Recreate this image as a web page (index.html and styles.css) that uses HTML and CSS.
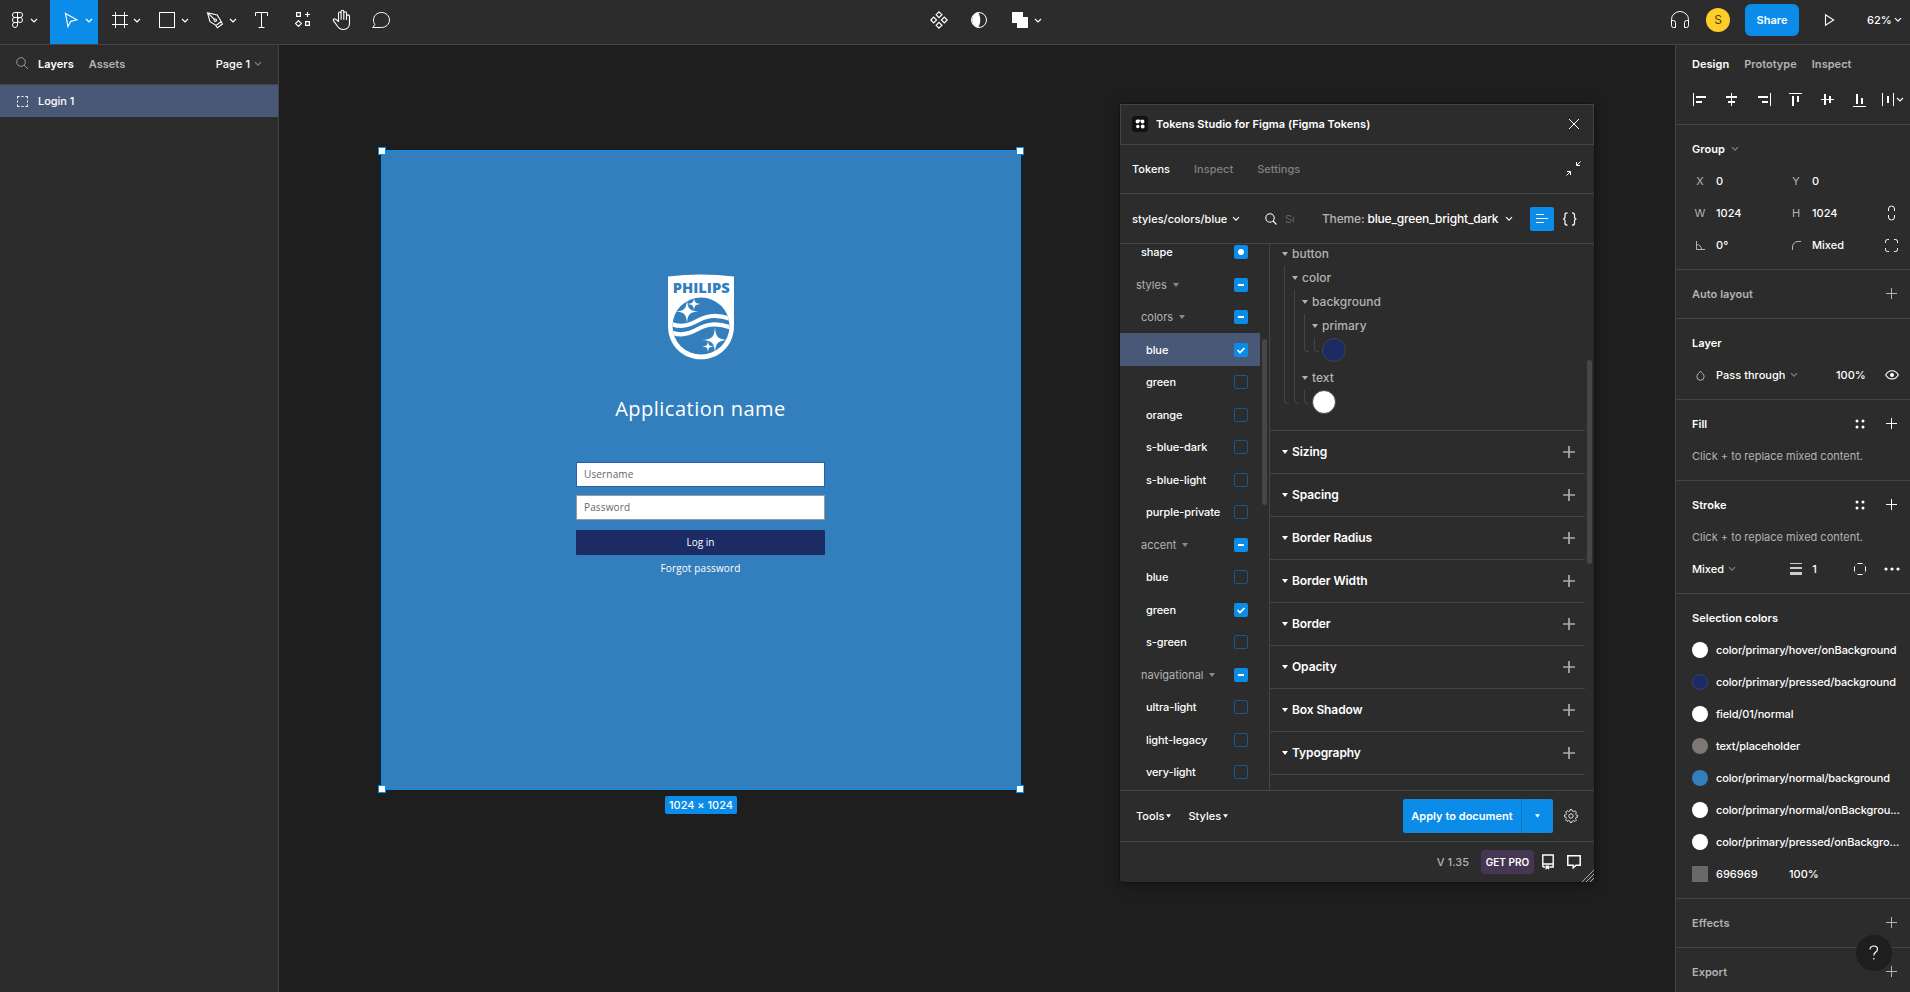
FILE: index.html
```html
<!DOCTYPE html>
<html lang="en">
<head>
<meta charset="utf-8">
<title>Login 1</title>
<link rel="stylesheet" href="styles.css">
</head>
<body>
<svg class="defs" width="0" height="0">
  <symbol id="chev" viewBox="0 0 8 6"><path d="M1 1.2 4 4.2 7 1.2" fill="none" stroke="currentColor" stroke-width="1.2"/></symbol>
  <symbol id="plus" viewBox="0 0 12 12"><path d="M5.5 0v11M0 5.5h11" fill="none" stroke="currentColor"/></symbol>
  <symbol id="plus2" viewBox="0 0 12 12"><path d="M6 0v12M0 6h12" fill="none" stroke="currentColor" stroke-width="1.7"/></symbol>
  <symbol id="tri" viewBox="0 0 6 4"><path d="M0 0h6L3 4z" fill="currentColor"/></symbol>
  <symbol id="dots" viewBox="0 0 10 10"><g fill="currentColor"><circle cx="2" cy="2" r="1.5"/><circle cx="8" cy="2" r="1.5"/><circle cx="2" cy="8" r="1.5"/><circle cx="8" cy="8" r="1.5"/></g></symbol>
  <symbol id="star" viewBox="-10 -10 20 20"><path d="M0-10C.6-2 2-.6 10 0 2 .6.6 2 0 10-.6 2-2 .6-10 0-2-.6-.6-2 0-10z" fill="#fff"/></symbol>
</svg>
<div class="app">
  <header class="toolbar">
    <div class="tools">
      <svg width="50" height="44" viewBox="0 0 50 44"><g fill="none" stroke="#fff"><path d="M17.500 12.500h-2.600a2.500 2.500 0 0 0 0 5h2.600zM17.500 12.500h2.600a2.500 2.500 0 0 1 0 5h-2.600zM17.500 17.500h-2.600a2.500 2.500 0 0 0 0 5h2.600zM17.500 22.500h-2.600a2.500 2.500 0 1 0 2.600 2.500z"/><circle cx="20" cy="20" r="2.500"/></g><path class="tchev" d="M31 19l3 3 3-3"/></svg>
      <svg class="active" width="48" height="44" viewBox="50 0 48 44"><path d="M65.500 13.500l11.300 6.300-6 1.500-2.800 5.200z" fill="none" stroke="#fff" stroke-width="1.200"/><path class="tchev" d="M86 19l3 3 3-3"/></svg>
      <svg width="48" height="44" viewBox="98 0 48 44"><path d="M115.500 12v16M124.500 12v16M112 15.500h16M112 24.500h16" fill="none" stroke="#fff"/><path class="tchev" d="M134 19l3 3 3-3"/></svg>
      <svg width="48" height="44" viewBox="146 0 48 44"><rect x="159.500" y="12.500" width="15" height="15" fill="none" stroke="#fff"/><path class="tchev" d="M182 19l3 3 3-3"/></svg>
      <svg width="48" height="44" viewBox="194 0 48 44"><g fill="none" stroke="#fff" stroke-width="1.100"><path d="M207.500 12.700l9.700 2.200 4 6.600-5.200 3.900-6-3.700zM208 13.200l6.500 6.300M221 21.400l1.400 2.600-5.100 3.700-1.700-2.400"/><circle cx="215.300" cy="20.200" r="1.200"/></g><path class="tchev" d="M230 19l3 3 3-3"/></svg>
      <svg width="40" height="44" viewBox="242 0 40 44"><path d="M255.500 16v-3.500h12V16M261.500 12.500v15M258.500 27.500h6" fill="none" stroke="#fff"/></svg>
      <svg width="40" height="44" viewBox="282 0 40 44"><g fill="none" stroke="#fff" stroke-width="1.200"><path d="M296.600 12.600h3.800v3.800h-3.800zM305.600 21.600h3.800v3.800h-3.800zM307.500 12v5M305 14.500h5M298.500 20.700l2.900 2.900-2.900 2.900-2.900-2.900z"/></g></svg>
      <svg width="40" height="44" viewBox="322 0 40 44"><path d="M338.500 21.500v-8c0-2 2.600-2 2.600 0v6.200-8c0-1.900 2.700-1.900 2.700 0v8-6.600c0-1.900 2.700-1.900 2.700 0v7-3.800c0-1.900 3-1.900 3 0v7c0 4-2.700 6.200-6 6.200-3.600 0-5.200-1.600-6.500-4l-3.600-4.800c-.8-1.500 1-2.500 2.200-1.400z" fill="none" stroke="#fff" stroke-width="1.100"/></svg>
      <svg width="40" height="44" viewBox="362 0 40 44"><path d="M381.500 12.500c-4.500 0-8 3.300-8 7.500 0 2 .5 3.300 1.400 4.500l-2.200 3h8.800c4.500 0 8-3.300 8-7.500s-3.500-7.500-8-7.500z" fill="none" stroke="#fff"/></svg>
    </div>
    <svg class="center-tools" width="130" height="44" viewBox="920 0 130 44">
      <g fill="none" stroke="#fff" stroke-width="1.200"><path d="M939 11.800l2.900 2.900-2.900 2.900-2.900-2.900zM939 22.400l2.900 2.900-2.900 2.900-2.900-2.900zM933.700 17.100l2.900 2.900-2.900 2.900-2.900-2.900zM944.300 17.100l2.900 2.900-2.900 2.900-2.900-2.900z"/></g>
      <circle cx="979" cy="20" r="7.500" fill="none" stroke="#fff"/><path d="M978 12.300a8 8 0 0 0 0 15.400c3-4 3-11.400 0-15.400z" fill="#fff"/>
      <path d="M1012 12h11v5h5v11h-11v-5h-5z" fill="#fff"/><path class="tchev" d="M1035 19l3 3 3-3"/>
    </svg>
    <div class="account">
      <svg width="20" height="20" viewBox="1670 10 20 20"><path d="M1671.500 23v-3.500a8.500 8 0 0 1 17 0V23M1671.500 20.500h2a2 2 0 0 1 2 2v5h-2a2 2 0 0 1-2-2zM1688.500 20.500h-2a2 2 0 0 0-2 2v5h2a2 2 0 0 0 2-2z" fill="none" stroke="#fff"/></svg>
      <span class="avatar">S</span>
      <span class="share">Share</span>
      <svg class="play" width="12" height="14" viewBox="0 0 12 14"><path d="M1.500 1.700v10.600L9.700 7z" fill="none" stroke="#fff" stroke-width="1.100"/></svg>
      <span class="zoom">62%</span>
      <svg width="8" height="6"><use href="#chev"/></svg>
    </div>
  </header>
  <div class="workspace">
    <aside class="layers">
      <div class="layers-head">
        <svg width="14" height="14" viewBox="0 0 14 14"><g fill="none" stroke="#999"><circle cx="5" cy="5" r="4.300"/><path d="M8 8l4 4"/></g></svg>
        <b>Layers</b><b class="dim">Assets</b>
        <span class="page">Page 1</span><svg class="grey" width="8" height="6"><use href="#chev"/></svg>
      </div>
      <div class="layer-row"><svg width="11" height="11" viewBox="0 0 11 11"><path d="M.5 2.500v-2h2M4.500.5h2M8.500.5h2v2M10.500 4.500v2M10.500 8.500v2h-2M6.500 10.500h-2M2.500 10.500h-2v-2M.5 6.500v-2" fill="none" stroke="#fff"/></svg>Login 1</div>
    </aside>
    <main class="canvas">
      <div class="artboard">
        <i class="handle tl"></i><i class="handle tr"></i><i class="handle bl"></i><i class="handle br"></i>
        <svg class="logo" width="66" height="86" viewBox="0 0 66 86">
          <path d="M0 2.500Q33-1.500 66 2.500V52c0 19-14.500 33.300-33 33.300S0 71 0 52z" fill="#fff"/>
          <text x="4.700" y="18.700" textLength="57" lengthAdjust="spacingAndGlyphs" class="brand">PHILIPS</text>
          <clipPath id="disc"><circle cx="33" cy="52" r="28.500"/></clipPath>
          <circle cx="33" cy="52" r="28.500" fill="#337fbd"/>
          <g clip-path="url(#disc)" fill="none" stroke="#fff" stroke-width="4.200"><path d="M0 48.500c10 5 18 4.500 27-.5s19-9.500 37-2.500M0 57c10 5 18 4.500 27-.5s19-9.500 37-2.500"/></g>
          <use href="#star" x="7" y="25.500" width="24" height="24"/><use href="#star" x="19" y="23" width="14" height="14"/>
          <use href="#star" x="34" y="53" width="26" height="26"/><use href="#star" x="34" y="66.500" width="12" height="12"/>
        </svg>
        <h1>Application name</h1>
        <div class="field user">Username</div>
        <div class="field pass">Password</div>
        <div class="login">Log in</div>
        <div class="forgot">Forgot password</div>
      </div>
      <div class="size-tag">1024 × 1024</div>

      <section class="plugin">
        <div class="p-title">
          <svg width="16" height="16" viewBox="0 0 16 16"><rect width="16" height="16" rx="3.500" fill="#111"/><g fill="#fff"><circle cx="5.500" cy="5.500" r="1.900"/><circle cx="10.500" cy="5.500" r="1.900"/><circle cx="5.800" cy="10.500" r="1.700"/><circle cx="10.700" cy="10.500" r="1.900"/><path d="M5.500 3.700h3v1.800h-3z"/></g></svg>
          <b>Tokens Studio for Figma (Figma Tokens)</b>
          <svg class="end" width="12" height="12" viewBox="0 0 12 12"><path d="M1 1l10 10M11 1L1 11" stroke="#fff" fill="none"/></svg>
        </div>
        <div class="p-tabs"><span class="on">Tokens</span><span>Inspect</span><span>Settings</span>
          <svg class="end" width="15" height="15" viewBox="0 0 15 15"><path d="M14.500.5l-4 4M10.500 1v3.500h3.500M.5 14.500l4-4M1 10.500h3.500V14" stroke="#fff" fill="none"/></svg></div>
        <div class="p-bar">
          <span class="set">styles/colors/blue</span><svg class="c1" width="8" height="6"><use href="#chev"/></svg>
          <svg class="mag" width="12" height="12" viewBox="0 0 12 12"><g fill="none" stroke="#fff" stroke-width="1.100"><circle cx="5" cy="5" r="4.200"/><path d="M8 8l3.500 3.500"/></g></svg>
          <span class="search">Se</span>
          <span class="theme">Theme: <em>blue_green_bright_dark</em></span><svg class="c2" width="8" height="6"><use href="#chev"/></svg>
          <span class="listbtn"><svg width="12" height="10" viewBox="0 0 12 10"><path d="M0 .5h8M0 4.500h12M0 8.500h8" stroke="#fff"/></svg></span>
          <svg width="16" height="14" viewBox="0 0 16 14"><path d="M5.500.8c-2 0-2.500.7-2.500 2V5c0 1.200-.7 2-2 2 1.300 0 2 .8 2 2v2.200c0 1.300.5 2 2.500 2M10 .8c2 0 2.500.7 2.500 2V5c0 1.200.7 2 2 2-1.300 0-2 .8-2 2v2.200c0 1.300-.5 2-2.500 2" fill="none" stroke="#fff" stroke-width="1.200"/></svg>
        </div>
        <div class="p-body">
          <div class="sets">
            <div class="set-row l1">shape<i class="cb full"><svg width="14" height="14"><circle cx="7" cy="7" r="3" fill="#fff"/></svg></i></div>
            <div class="set-row l0 group">styles<svg width="6" height="4"><use href="#tri"/></svg><i class="cb full mix"></i></div>
            <div class="set-row l1 group">colors<svg width="6" height="4"><use href="#tri"/></svg><i class="cb full mix"></i></div>
            <div class="set-row l2 sel">blue<i class="cb full"><svg width="14" height="14"><path d="M3.500 7l2.500 2.500 4.500-4.500" stroke="#fff" stroke-width="1.700" fill="none"/></svg></i></div>
            <div class="set-row l2">green<i class="cb"></i></div>
            <div class="set-row l2">orange<i class="cb"></i></div>
            <div class="set-row l2">s-blue-dark<i class="cb"></i></div>
            <div class="set-row l2">s-blue-light<i class="cb"></i></div>
            <div class="set-row l2">purple-private<i class="cb"></i></div>
            <div class="set-row l1 group">accent<svg width="6" height="4"><use href="#tri"/></svg><i class="cb full mix"></i></div>
            <div class="set-row l2">blue<i class="cb"></i></div>
            <div class="set-row l2">green<i class="cb full"><svg width="14" height="14"><path d="M3.500 7l2.500 2.500 4.500-4.500" stroke="#fff" stroke-width="1.700" fill="none"/></svg></i></div>
            <div class="set-row l2">s-green<i class="cb"></i></div>
            <div class="set-row l1 group">navigational<svg width="6" height="4"><use href="#tri"/></svg><i class="cb full mix"></i></div>
            <div class="set-row l2">ultra-light<i class="cb"></i></div>
            <div class="set-row l2">light-legacy<i class="cb"></i></div>
            <div class="set-row l2">very-light<i class="cb"></i></div>
            <i class="scroll s-left"></i>
          </div>
          <div class="tokens">
            <div class="tree">
              <div class="node"><svg width="6" height="4"><use href="#tri"/></svg>button</div>
              <div class="kids">
                <div class="node"><svg width="6" height="4"><use href="#tri"/></svg>color</div>
                <div class="kids">
                  <div class="node"><svg width="6" height="4"><use href="#tri"/></svg>background</div>
                  <div class="kids">
                    <div class="node"><svg width="6" height="4"><use href="#tri"/></svg>primary</div>
                    <div class="kids"><i class="dot navy"></i></div>
                  </div>
                  <div class="node second"><svg width="6" height="4"><use href="#tri"/></svg>text</div>
                  <div class="kids"><i class="dot white"></i></div>
                </div>
              </div>
            </div>
            <div class="tk"><svg width="6" height="4"><use href="#tri"/></svg>Sizing<svg class="add" width="12" height="12"><use href="#plus2"/></svg></div>
            <div class="tk"><svg width="6" height="4"><use href="#tri"/></svg>Spacing<svg class="add" width="12" height="12"><use href="#plus2"/></svg></div>
            <div class="tk"><svg width="6" height="4"><use href="#tri"/></svg>Border Radius<svg class="add" width="12" height="12"><use href="#plus2"/></svg></div>
            <div class="tk"><svg width="6" height="4"><use href="#tri"/></svg>Border Width<svg class="add" width="12" height="12"><use href="#plus2"/></svg></div>
            <div class="tk"><svg width="6" height="4"><use href="#tri"/></svg>Border<svg class="add" width="12" height="12"><use href="#plus2"/></svg></div>
            <div class="tk"><svg width="6" height="4"><use href="#tri"/></svg>Opacity<svg class="add" width="12" height="12"><use href="#plus2"/></svg></div>
            <div class="tk"><svg width="6" height="4"><use href="#tri"/></svg>Box Shadow<svg class="add" width="12" height="12"><use href="#plus2"/></svg></div>
            <div class="tk"><svg width="6" height="4"><use href="#tri"/></svg>Typography<svg class="add" width="12" height="12"><use href="#plus2"/></svg></div>
            <div class="tk-end"></div>
            <i class="scroll s-right"></i>
          </div>
        </div>
        <div class="p-actions">
          <span class="menu">Tools<svg width="5" height="4"><use href="#tri"/></svg></span>
          <span class="menu">Styles<svg width="5" height="4"><use href="#tri"/></svg></span>
          <span class="apply"><b>Apply to document</b><i><svg width="5" height="4"><use href="#tri"/></svg></i></span>
          <svg class="gear" width="14" height="14" viewBox="-7 -7 14 14"><path d="M-1-6.400h2l.4 1.600 1.300.5 1.400-.9 1.400 1.400-.9 1.400.5 1.300 1.500.3v1.900l-1.600.3-.5 1.300.9 1.400-1.400 1.400-1.400-.9-1.300.5L1 6.400h-2l-.3-1.500-1.300-.5-1.400.9-1.400-1.400.9-1.400-.5-1.300-1.500-.3v-1.900l1.600-.3.5-1.300-.9-1.400 1.400-1.400 1.400.9 1.300-.5z" fill="none" stroke="#ddd"/><circle r="2.200" fill="none" stroke="#ddd"/></svg>
        </div>
        <div class="p-foot">
          <span class="ver">V 1.35</span><span class="pro">GET PRO</span>
          <svg width="12" height="16" viewBox="0 0 12 16"><path d="M.8 13V1h10.400v12H7.500M.8 13H3M.8 10h10.400" fill="none" stroke="#fff" stroke-width="1.400"/><path d="M3.500 11.500h3.700v4.300l-1.800-1.300-1.900 1.300z" fill="#fff"/></svg>
          <svg width="14" height="14" viewBox="0 0 14 14"><path d="M.8.8h12.400v9.400H9l-2.800 2.600v-2.600H.8z" fill="none" stroke="#fff" stroke-width="1.500"/></svg>
          <svg class="grip" width="12" height="12" viewBox="0 0 12 12"><path d="M0 12L12 0M4 12l8-8M8 12l4-4" stroke="#aaa" fill="none"/></svg>
        </div>
      </section>
    </main>
    <aside class="props">
      <div class="tabs"><b>Design</b><b class="dim">Prototype</b><b class="dim">Inspect</b></div>
      <svg class="align" width="234" height="39" viewBox="1676 85 234 39">
        <g fill="#fff"><path d="M1693 93h1v13h-1zM1696 96h10v2h-10zM1696 101h6v2h-6zM1731 93h1v13h-1zM1726 96h11v2h-11zM1728 101h7v2h-7zM1770 93h1v13h-1zM1758 96h10v2h-10zM1762 101h6v2h-6zM1789 93h13v1h-13zM1792 96h2v10h-2zM1797 96h2v6h-2zM1821 99h13v1h-13zM1824 94h2v11h-2zM1829 96h2v7h-2zM1853 106h13v1h-13zM1856 94h2v10h-2zM1861 98h2v6h-2zM1882 93h1v13h-1zM1893 93h1v13h-1zM1887 96h2v7h-2z"/></g><path class="tchev" d="M1897 98l3 3 3-3"/>
      </svg>
      <div class="sec">
        <div class="r"><b>Group</b><svg class="grey" width="8" height="6"><use href="#chev"/></svg></div>
        <div class="g"><i>X</i><span>0</span><i>Y</i><span>0</span></div>
        <div class="g"><i>W</i><span>1024</span><i>H</i><span>1024</span><svg width="10" height="16" viewBox="0 0 10 16"><path d="M2.500 6V4a3 3 0 0 1 6 0v2M2.500 10v2a3 3 0 0 0 6 0v-2" fill="none" stroke="#fff"/></svg></div>
        <div class="g"><i><svg width="9" height="9" viewBox="0 0 9 9"><path d="M.5 0v8.500H9M.5 3.500a5 5 0 0 1 5 5" fill="none" stroke="#b3b3b3"/></svg></i><span>0°</span><i><svg width="9" height="9" viewBox="0 0 9 9"><path d="M.5 9V6A5.500 5.500 0 0 1 6 .5h3" fill="none" stroke="#b3b3b3"/></svg></i><span>Mixed</span><svg width="13" height="13" viewBox="0 0 13 13"><path d="M.5 4V2.500a2 2 0 0 1 2-2H4M9 .5h1.500a2 2 0 0 1 2 2V4M12.500 9v1.500a2 2 0 0 1-2 2H9M4 12.500H2.500a2 2 0 0 1-2-2V9" fill="none" stroke="#fff"/></svg></div>
      </div>
      <div class="sec"><div class="r"><b class="dim">Auto layout</b><svg class="add dim" width="12" height="12"><use href="#plus"/></svg></div></div>
      <div class="sec">
        <div class="r"><b>Layer</b></div>
        <div class="r"><i class="ic"><svg width="9" height="11" viewBox="0 0 9 11"><path d="M4.500 1C3 3 .9 4.600.9 6.700a3.600 3.600 0 0 0 7.200 0C8.100 4.600 6 3 4.500 1z" fill="none" stroke="#b3b3b3"/></svg></i><span>Pass through</span><svg class="grey" width="8" height="6"><use href="#chev"/></svg><span class="pct">100%</span>
          <svg width="14" height="10" viewBox="0 0 14 10"><path d="M.7 5C3.500-.7 10.500-.7 13.300 5 10.500 10.200 3.500 10.200.7 5z" fill="none" stroke="#fff" stroke-width="1.100"/><circle cx="7" cy="5" r="2" fill="#fff"/></svg></div>
      </div>
      <div class="sec">
        <div class="r"><b>Fill</b><svg class="dots" width="10" height="10"><use href="#dots"/></svg><svg class="add" width="12" height="12"><use href="#plus"/></svg></div>
        <div class="r hint">Click + to replace mixed content.</div>
      </div>
      <div class="sec">
        <div class="r"><b>Stroke</b><svg class="dots" width="10" height="10"><use href="#dots"/></svg><svg class="add" width="12" height="12"><use href="#plus"/></svg></div>
        <div class="r hint">Click + to replace mixed content.</div>
        <div class="r"><span>Mixed</span><svg class="grey" width="8" height="6"><use href="#chev"/></svg>
          <svg class="weight" width="12" height="12" viewBox="0 0 12 12"><path d="M0 0h12v1H0zM0 4h12v2H0zM0 9h12v3H0z" fill="#ccc"/></svg><span>1</span>
          <svg class="dash" width="12" height="12" viewBox="0 0 12 12"><path d="M3.500.5h5M3.500 11.500h5M.5 3.500v5M11.500 3.500v5" stroke="#fff"/><path d="M1 2.500L2.500 1M11 2.500L9.500 1M1 9.500L2.500 11M11 9.500L9.500 11" stroke="#666"/></svg>
          <svg class="more" width="16" height="4" viewBox="0 0 16 4"><g fill="#fff"><circle cx="2" cy="2" r="1.600"/><circle cx="8" cy="2" r="1.600"/><circle cx="14" cy="2" r="1.600"/></g></svg></div>
      </div>
      <div class="sec colors">
        <div class="r"><b>Selection colors</b></div>
        <div class="r"><i class="sw white"></i><span>color/primary/hover/onBackground</span></div>
        <div class="r"><i class="sw navy"></i><span>color/primary/pressed/background</span></div>
        <div class="r"><i class="sw white"></i><span>field/01/normal</span></div>
        <div class="r"><i class="sw taupe"></i><span>text/placeholder</span></div>
        <div class="r"><i class="sw blue"></i><span>color/primary/normal/background</span></div>
        <div class="r"><i class="sw white"></i><span>color/primary/normal/onBackgrou...</span></div>
        <div class="r"><i class="sw white"></i><span>color/primary/pressed/onBackgro...</span></div>
        <div class="r"><i class="sw square"></i><span class="hex">696969</span><span class="hex-pct">100%</span></div>
      </div>
      <div class="sec"><div class="r"><b class="dim">Effects</b><svg class="add dim" width="12" height="12"><use href="#plus"/></svg></div></div>
      <div class="sec"><div class="r"><b class="dim">Export</b><svg class="add dim" width="12" height="12"><use href="#plus"/></svg></div></div>
      <span class="help"><svg width="10" height="16" viewBox="0 0 10 16"><path d="M1 4.500C1 2.200 2.700 1 4.800 1s3.700 1.200 3.700 3.300C8.500 7.200 4.800 7 4.800 10.500M4.800 13v1.500" fill="none" stroke="#fff" stroke-width="1.200"/></svg></span>
    </aside>
  </div>
</div>
</body>
</html>
```
FILE: styles.css
```css
* { box-sizing: border-box; }
body { margin: 0; background: #1e1e1e; color: #fff; font: 500 11px/16px Inter, "Liberation Sans", sans-serif; letter-spacing: 0.03px; overflow: hidden; }
svg { display: block; flex: none; }
.defs { position: absolute; }
b { font-weight: 600; }
i, em { font-style: normal; }
span { white-space: nowrap; }
.dim { color: #b3b3b3; }
.grey { color: #808080; }
.tchev { fill: none; stroke: #fff; stroke-width: 1.2; }
.app { width: 1910px; height: 992px; display: flex; flex-direction: column; }

.toolbar { height: 45px; flex: none; display: flex; justify-content: space-between; background: #2c2c2c; border-bottom: 1px solid #444; }
.tools { display: flex; width: 920px; }
.tools .active { background: #0c8ce9; }
.account { width: 860px; display: flex; align-items: center; justify-content: flex-end; height: 40px; padding-right: 8px; }
.avatar { width: 24px; height: 24px; margin: 0 15px 0 16px; border-radius: 50%; background: #ffcd29; color: #4d3c00; font-size: 12px; font-weight: 400; line-height: 24px; text-align: center; }
.share { width: 54px; height: 32px; border-radius: 6px; background: #0c8ce9; font-weight: 600; line-height: 32px; text-align: center; }
.play { margin: 0 31px 0 25px; }
.zoom { width: 23px; margin-right: 4px; }

.workspace { flex: 1; display: flex; min-height: 0; }
.layers { width: 279px; background: #2c2c2c; border-right: 1px solid #444; }
.layers-head { height: 40px; display: flex; align-items: center; padding: 0 16px 2px; border-bottom: 1px solid #444; }
.layers-head b { margin-left: 8px; }
.layers-head b.dim { margin-left: 15px; }
.page { margin: 0 4px 0 auto; }
.layer-row { height: 32px; display: flex; align-items: center; gap: 10px; padding-left: 17px; background: #4a5878; letter-spacing: -.05px; }

.canvas { flex: 1; position: relative; overflow: hidden; }
.artboard { position: absolute; left: 102px; top: 105px; width: 640px; height: 640px; border: 1px solid #0c8ce9; background: #337fbd; display: flex; flex-direction: column; align-items: center; font-family: "Open Sans", "Noto Sans", sans-serif; font-weight: 400; }
.handle { position: absolute; width: 8px; height: 8px; background: #fff; border: 1px solid #0c8ce9; }
.tl { left: -4px; top: -4px; } .tr { right: -4px; top: -4px; } .bl { left: -4px; bottom: -4px; } .br { right: -4px; bottom: -4px; }
.logo { margin: 123px 1px 0 0; }
.brand { font: 800 14px "Open Sans", sans-serif; fill: #337fbd; letter-spacing: 0; }
.artboard h1 { margin: 34px 1px 38px 0; font-weight: 400; font-size: 20px; line-height: 30px; letter-spacing: 0.5px; }
.field { width: 249px; height: 25px; margin-right: 1px; padding-left: 7px; background: #fff; border: 1px solid #999; color: #6b6666; font-size: 10px; line-height: 23px; letter-spacing: 0.15px; }
.user { border-color: #2a5ea8; }
.pass { margin-top: 8px; }
.login { width: 249px; height: 25px; margin: 10px 1px 0 0; border-radius: 1px; background: #1c2b63; font-size: 10px; line-height: 24px; text-align: center; }
.forgot { margin: 5px 1px 0 0; font-size: 10px; line-height: 16px; letter-spacing: .12px; }
.size-tag { position: absolute; left: 386px; top: 751px; width: 72px; height: 18px; border-radius: 2px; background: #0c8ce9; line-height: 18px; text-align: center; letter-spacing: -.03px; }

.plugin { position: absolute; left: 841px; top: 59px; width: 474px; height: 778px; display: flex; flex-direction: column; background: #2c2c2c; border-radius: 2px; box-shadow: 0 2px 14px rgba(0,0,0,.4), 0 0 0 .5px rgba(0,0,0,.4); }
.plugin > div { flex: none; display: flex; align-items: center; border-bottom: 1px solid #444; }
.plugin .p-title { height: 41px; padding: 0 13px 1px 11px; gap: 8px; border: 1px solid #444; }
.end { margin-left: auto; }
.plugin .p-tabs { height: 49px; padding: 0 13px 1px 12px; gap: 24px; color: #808080; }
.on { color: #fff; }
.plugin .p-bar { height: 50px; padding: 0 16px 0 12px; }
.set { width: 95px; }
.c1 { margin: 0 25px 0 5px; }
.search { margin-left: 8px; width: 9px; overflow: hidden; color: #666; font-weight: 400; }
.theme { margin-left: 28px; color: #b3b3b3; font-size: 12px; width: 179px; letter-spacing: -.17px; }
.theme em { color: #fff; }
.c2 { margin: 0 17px 0 5px; }
.listbtn { width: 24px; height: 24px; margin-right: 8px; border-radius: 2px; background: #0c8ce9; display: grid; place-items: center; }
.plugin .p-body { height: 547px; align-items: stretch; overflow: hidden; }
.sets { position: relative; width: 150px; border-right: 1px solid #444; overflow: hidden; letter-spacing: -.1px; }
.set-row { width: 140px; height: 32.5px; display: flex; align-items: center; }
.set-row:first-child { margin-top: -8.2px; }
.l0 { padding-left: 16px; } .l1 { padding-left: 21px; } .l2 { padding-left: 26px; }
.set-row > svg { margin-left: 6px; opacity: .7; }
.group { color: #b3b3b3; font-weight: 400; letter-spacing: 0; }
.sel { background: #4a5878; }
.cb { width: 14px; height: 14px; margin: 0 12px 0 auto; border: 1px solid #16578c; border-radius: 2px; }
.cb.full { border: 0; background: #0c8ce9; }
.mix { display: grid; place-items: center; }
.mix::before { content: ""; width: 6px; height: 2px; background: #fff; }
.scroll { position: absolute; width: 5px; border-radius: 3px; background: #464646; }
.s-left { right: 2px; top: 95px; height: 166px; }
.s-right { right: 2px; top: 116px; height: 204px; }
.tokens { position: relative; flex: 1; padding-right: 9px; overflow: hidden; }
.tree { display: flow-root; height: 186px; padding: 0 0 0 12px; font-size: 12px; color: #b3b3b3; }
.tree > .node:first-child { margin-top: -2px; }
.node { height: 24px; display: flex; align-items: center; gap: 4px; }
.second { margin-top: 4px; }
.kids { position: relative; padding-left: 10px; }
.kids::before { content: ""; position: absolute; left: 2px; top: 0; bottom: 10px; width: 4px; border: solid #444; border-width: 0 0 1px 1px; border-bottom-left-radius: 4px; }
.dot { display: block; width: 24px; height: 24px; border: 1px solid #444; border-radius: 50%; }
.navy { background: #1c2b63; } .white { background: #fff; }
.tk { height: 43px; border-top: 1px solid #444; display: flex; align-items: center; gap: 4px; padding: 0 10px 0 12px; font-size: 12px; font-weight: 600; letter-spacing: -.1px; }
.tk .add { margin-left: auto; opacity: .6; }
.tk-end { border-top: 1px solid #444; }
.plugin .p-actions { height: 51px; padding: 0 16px 0 16px; }
.menu { display: flex; align-items: center; gap: 2px; margin-right: 17px; }
.apply { display: flex; width: 150px; height: 34px; margin-left: auto; background: #0c8ce9; border-radius: 2px; align-items: stretch; line-height: 34px; }
.apply b { width: 119px; text-align: center; border-right: 1px solid #0b74c0; }
.apply i { flex: 1; display: grid; place-items: center; }
.gear { margin-left: 11px; }
.plugin .p-foot { position: relative; height: 40px; padding-right: 13px; justify-content: flex-end; border: 0; }
.ver { color: #b3b3b3; margin-right: 12px; }
.pro { width: 53px; height: 24px; margin-right: 8px; border-radius: 4px; background: #453653; font-size: 10px; font-weight: 600; line-height: 24px; text-align: center; }
.p-foot svg:nth-of-type(1) { margin-right: 13px; }
.p-foot .grip { position: absolute; right: 0; bottom: 0; }

.props { position: relative; width: 235px; background: #2c2c2c; border-left: 1px solid #444; }
.tabs { height: 40px; display: flex; align-items: center; gap: 15px; padding: 0 0 2px 16px; }
.sec { border-top: 1px solid #444; padding: 8px 7px 8px 16px; }
.r { height: 32px; display: flex; align-items: center; font-weight: 500; }
.colors .r span { letter-spacing: -.13px; }
.r b + .grey { margin-left: 6px; }
.r span + .grey { margin-left: 4px; }
.r .add { margin: 0 5px 0 auto; }
.dots { margin-left: auto; }
.r .dots + .add { margin-left: 21px; }
.hint { color: #b3b3b3; font-weight: 400; letter-spacing: 0; }
.g { height: 32px; display: grid; grid-template-columns: 24px 72px 24px 67px 24px; align-items: center; }
.g i, .ic { width: 16px; display: grid; place-items: center; color: #b3b3b3; font-weight: 400; }
.g > svg { justify-self: center; }
.ic { margin-right: 8px; }
.pct { width: 28px; margin: 0 21px 0 auto; }
.r .pct + svg { margin-right: 4px; }
.weight { margin: 0 10px 0 54px; }
.dash { margin-left: auto; }
.r .more { margin: 0 3px 0 18px; }
.sw { width: 16px; height: 16px; margin-right: 8px; border-radius: 50%; flex: none; }
.sw.navy { border: 1px solid #33427c; }
.taupe { background: #7d7775; } .blue { background: #337fbd; }
.sw.square { background: #696969; border-radius: 1px; }
.colors .r .hex, .colors .r .hex-pct { letter-spacing: 0; }
.hex { width: 73px; }
.help { position: absolute; left: 180px; top: 890px; width: 36px; height: 36px; border-radius: 50%; background: #1e1e1e; display: grid; place-items: center; }
```
